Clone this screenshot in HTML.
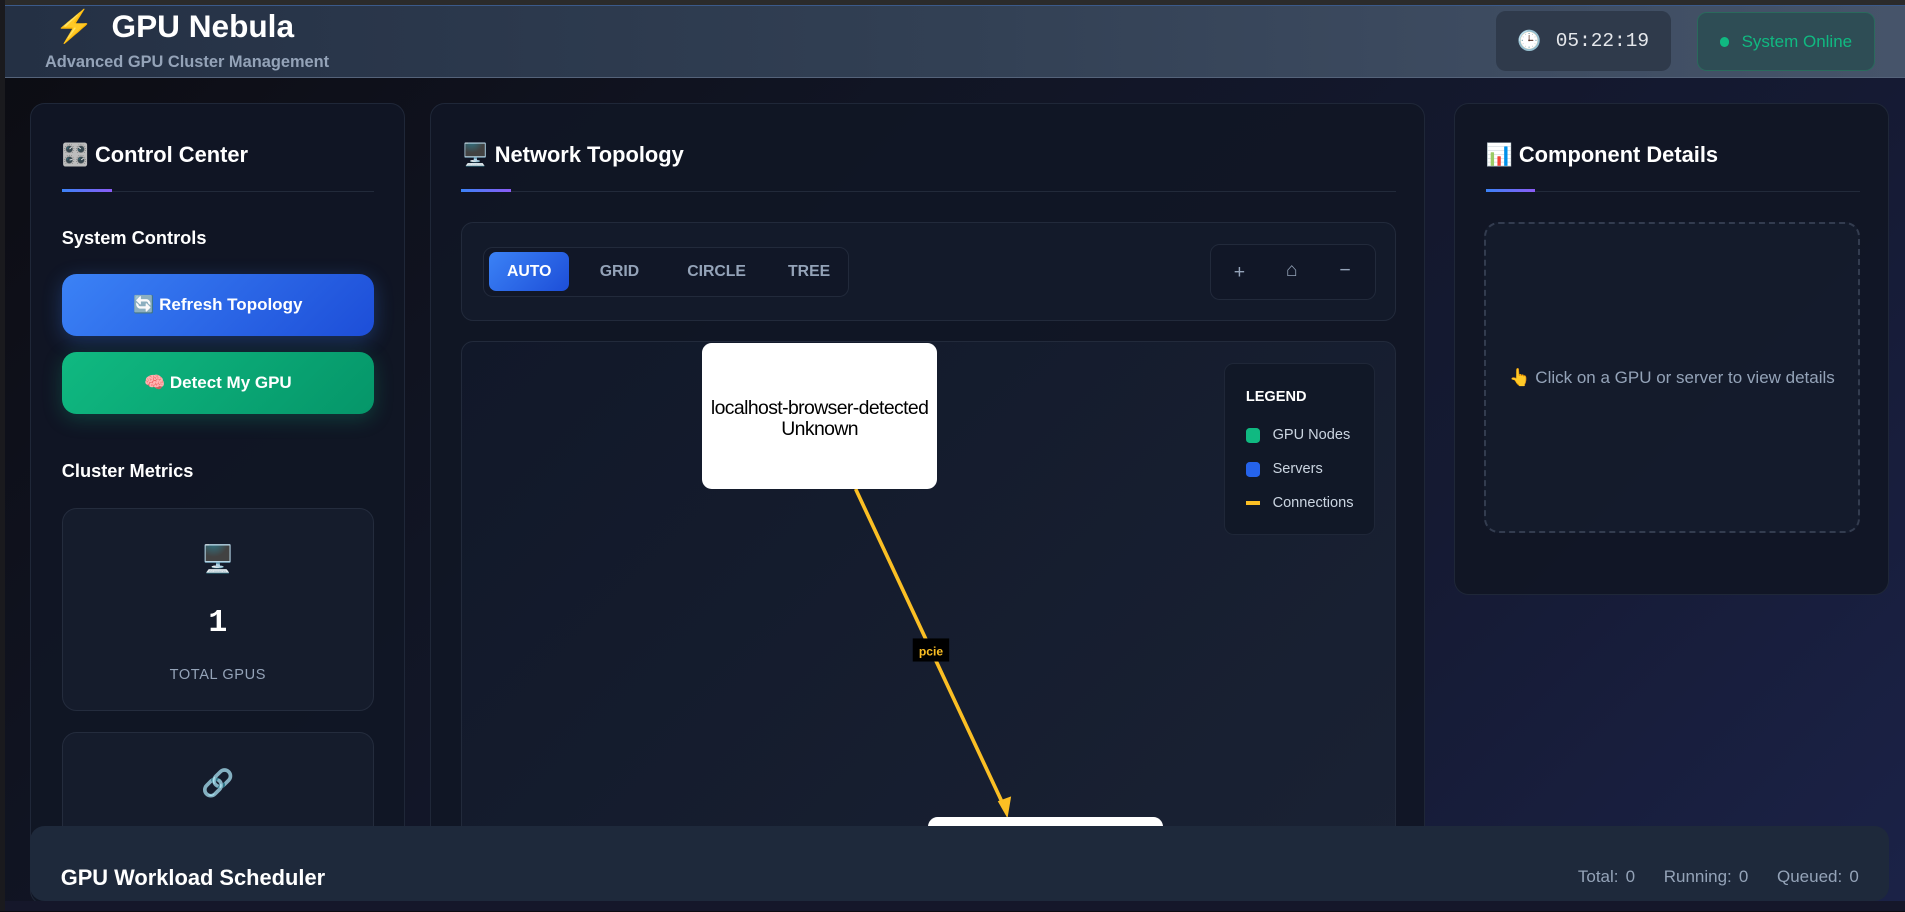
<!DOCTYPE html>
<html><head><meta charset="utf-8"><style>
html{zoom:1.21492}
*{box-sizing:border-box;margin:0;padding:0}
html,body{overflow:hidden;background:#0c0c12}
body{width:1568px;height:750px;font-family:"Liberation Sans","Noto Sans CJK SC",sans-serif;color:#fff}
#wrap{position:relative;width:1568px;height:750px;overflow:hidden;
background:linear-gradient(135deg,#0c0c12 0%,#111524 35%,#151a33 70%,#1b2247 100%)}
.frame{position:absolute;left:0;top:0;width:1568px;height:4px;background:#2b2b2b;z-index:5}
.frameL{position:absolute;left:0;top:0;width:4px;height:750px;background:#1a1a1e;z-index:5}
.hdr{position:absolute;left:4px;top:4px;right:0;height:60px;background:linear-gradient(90deg,#243044,#324054 50%,#46546a);border-bottom:1px solid #55637a;border-top:1px solid #3b5a8a}
.abs{position:absolute}
.panel{position:absolute;background:rgba(17,22,37,.95);border:1px solid #1f2738;border-radius:12px;overflow:hidden}
.ph{position:absolute;font-size:18px;font-weight:bold}
.ul{position:absolute;height:1px;background:#222a3a}
.ul i{position:absolute;left:0;top:-1px;width:41px;height:2px;background:linear-gradient(90deg,#3b82f6,#8b5cf6)}
.btn{position:absolute;left:25px;width:257px;height:51px;border-radius:12px;font-size:14px;font-weight:bold;display:flex;align-items:center;justify-content:center;gap:6px}
.card{position:absolute;left:25px;width:257px;background:#151c2c;border:1px solid #242c3d;border-radius:12px}
.sub{color:#94a3b8}
</style></head><body><div id="wrap">
<div class="frame"></div><div class="frameL"></div>
<div class="hdr">
 <div class="abs" style="left:41px;top:2px;font-size:26px;font-weight:bold">⚡&nbsp; GPU Nebula</div>
 <div class="abs sub" style="left:33px;top:39px;font-size:13.5px;font-weight:bold">Advanced GPU Cluster Management</div>
 <div class="abs" style="left:1227px;top:4px;width:144px;height:50px;background:#2f3a4b;border-radius:8px;display:flex;align-items:center;justify-content:center;gap:12px;font-family:'Liberation Mono',monospace;font-size:16px;color:#e5e7eb">🕒 <span>05:22:19</span></div>
 <div class="abs" style="left:1393px;top:5px;width:146px;height:49px;background:#2e4d55;border:1px solid #2a6a5c;border-radius:8px;display:flex;align-items:center;justify-content:center;gap:10px;font-size:14px;color:#10b981"><span style="width:8px;height:8px;border-radius:50%;background:#10b981"></span>System Online</div>
</div>

<div class="panel" style="left:25px;top:85px;width:308px;height:660px">
 <div class="ph" style="left:25px;top:31px">🎛️ Control Center</div>
 <div class="ul" style="left:25px;top:71px;width:257px"><i></i></div>
 <div class="abs" style="left:25px;top:102px;font-size:15px;font-weight:bold">System Controls</div>
 <div class="btn" style="top:140px;background:linear-gradient(135deg,#3b82f6,#1d4ed8);box-shadow:0 4px 16px rgba(59,130,246,.3)">🔄 Refresh Topology</div>
 <div class="btn" style="top:204px;background:linear-gradient(135deg,#10b981,#059669);box-shadow:0 4px 16px rgba(16,185,129,.25)">🧠 Detect My GPU</div>
 <div class="abs" style="left:25px;top:294px;font-size:15px;font-weight:bold">Cluster Metrics</div>
 <div class="card" style="top:332px;height:167px">
  <div class="abs" style="left:0;right:0;top:28px;text-align:center;font-size:22px">🖥️</div>
  <div class="abs" style="left:0;right:0;top:80px;text-align:center;font-size:26px;font-weight:bold;font-family:'Liberation Mono',monospace">1</div>
  <div class="abs sub" style="left:0;right:0;top:130px;text-align:center;font-size:12px;letter-spacing:.5px">TOTAL GPUS</div>
 </div>
 <div class="card" style="top:517px;height:160px">
  <div class="abs" style="left:0;right:0;top:28px;text-align:center;font-size:22px">🔗</div>
 </div>
</div>

<div class="panel" style="left:354px;top:85px;width:819px;height:660px">
 <div class="ph" style="left:25px;top:31px">🖥️ Network Topology</div>
 <div class="ul" style="left:25px;top:71px;width:769px"><i></i></div>
 <div class="abs" style="left:25px;top:97px;width:769px;height:81px;background:#131a2a;border:1px solid #222a3b;border-radius:10px">
  <div class="abs" style="left:17px;top:20px;width:301px;height:41px;border:1px solid #222a3b;border-radius:8px;background:#111727"></div>
  <div class="abs" style="left:22px;top:24px;width:66px;height:32px;border-radius:6px;background:linear-gradient(135deg,#3b82f6,#1d4ed8);font-size:13px;font-weight:bold;display:flex;align-items:center;justify-content:center">AUTO</div>
  <div class="abs sub" style="left:113px;top:33px;font-size:13px;font-weight:bold">GRID</div>
  <div class="abs sub" style="left:185px;top:33px;font-size:13px;font-weight:bold">CIRCLE</div>
  <div class="abs sub" style="left:268px;top:33px;font-size:13px;font-weight:bold">TREE</div>
  <div class="abs" style="left:615px;top:17px;width:137px;height:46px;border:1px solid #222a3b;border-radius:8px;background:#111727;color:#94a3b8;font-size:16px">
   <span class="abs" style="left:19px;top:13px">+</span><span class="abs" style="left:62px;top:12px">⌂</span><span class="abs" style="left:106px;top:12px">−</span>
  </div>
 </div>
 <div class="abs" style="left:25px;top:195px;width:769px;height:460px;background:linear-gradient(135deg,#111829,#1a2234);border:1px solid #222a3b;border-radius:10px;overflow:hidden">
  <svg class="abs" style="left:0;top:0" width="769" height="460">
   <line x1="324" y1="121" x2="447" y2="384" stroke="#fbbf24" stroke-width="3"/>
   <polygon points="449,392 441,378 452,374" fill="#fbbf24"/>
   <rect x="371" y="244" width="30" height="19" fill="#000"/>
   <text x="386" y="258" fill="#fbbf24" font-size="10" font-weight="bold" text-anchor="middle" font-family="Liberation Sans">pcie</text>
  </svg>
  <div class="abs" style="left:197px;top:1px;width:194px;height:120px;background:#fff;border-radius:8px;color:#000;font-family:'Liberation Sans',Arial,sans-serif;font-size:16px;text-align:center;line-height:17px;padding-top:45px;white-space:nowrap;letter-spacing:-.5px">localhost-browser-detected<br>Unknown</div>
  <div class="abs" style="left:383px;top:391px;width:194px;height:60px;background:#fff;border-radius:8px 8px 0 0"></div>
  <div class="abs" style="left:627px;top:17px;width:124px;height:142px;background:#111827;border:1px solid #1f2738;border-radius:8px;font-size:12px;color:#cbd5e1">
   <div class="abs" style="left:17px;top:21px;font-weight:bold;color:#fff">LEGEND</div>
   <div class="abs" style="left:17px;top:53px;width:12px;height:12px;border-radius:3px;background:#10b981"></div><div class="abs" style="left:39px;top:52px">GPU Nodes</div>
   <div class="abs" style="left:17px;top:81px;width:12px;height:12px;border-radius:3px;background:#2563eb"></div><div class="abs" style="left:39px;top:80px">Servers</div>
   <div class="abs" style="left:17px;top:113px;width:12px;height:3px;background:#fbbf24"></div><div class="abs" style="left:39px;top:108px">Connections</div>
  </div>
 </div>
</div>

<div class="panel" style="left:1197px;top:85px;width:358px;height:405px">
 <div class="ph" style="left:25px;top:31px">📊 Component Details</div>
 <div class="ul" style="left:25px;top:71px;width:308px"><i></i></div>
 <div class="abs" style="left:24px;top:97px;width:309px;height:256px;border:2px dashed #333c4f;border-radius:12px;background:rgba(30,41,59,.3);display:flex;align-items:center;justify-content:center;font-size:14px;color:#94a3b8">👆 Click on a GPU or server to view details</div>
</div>

<div class="abs" style="left:0;top:742px;width:1568px;height:8px;background:#15172a"></div>
<div class="abs" style="left:25px;top:680px;width:1530px;height:62px;background:#1e293b;border-radius:12px">
 <div class="abs" style="left:25px;top:32px;font-size:18px;font-weight:bold">GPU Workload Scheduler</div>
 <div class="abs sub" style="right:25px;top:34px;font-size:14px;word-spacing:2px">Total: 0 &nbsp;&nbsp; Running: 0 &nbsp;&nbsp; Queued: 0</div>
</div>
</div></body></html>
